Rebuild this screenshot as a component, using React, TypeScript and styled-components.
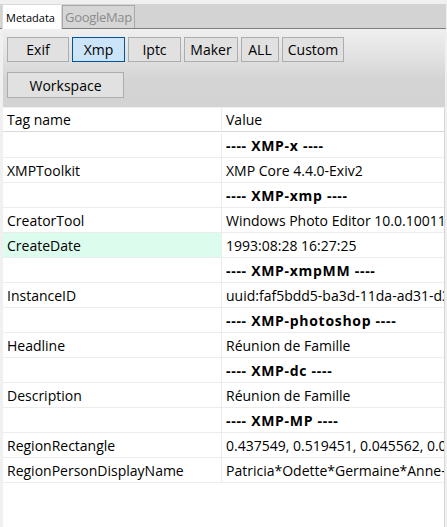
import React from 'react';
import styled, { createGlobalStyle } from 'styled-components';

const GlobalStyle = createGlobalStyle`
  html, body {
    margin: 0;
    padding: 0;
    background: #f0f0f0;
  }
  body {
    font-family: "Open Sans", "Noto Sans", "Liberation Sans", sans-serif;
    color: #000;
  }
`;

const Window = styled.div`
  width: 447px;
  height: 527px;
  background: #f0f0f0;
  display: flex;
  flex-direction: column;
  padding-top: 4px;
  box-sizing: border-box;
  overflow: hidden;
`;

const TabStrip = styled.div`
  height: 24px;
  margin-right: 1px;
  background: #d3d3d3;
  border-bottom: 1px solid #7f7f7f;
  display: flex;
  align-items: flex-end;
  padding-left: 2px;
  flex-shrink: 0;
`;

const Tab = styled.div<{ $active?: boolean }>`
  box-sizing: border-box;
  height: ${(p) => (p.$active ? '25px' : '23px')};
  margin-bottom: ${(p) => (p.$active ? '-1px' : '0')};
  padding: ${(p) => (p.$active ? '0 6px 0 3px' : '0 2px')};
  display: flex;
  align-items: center;
  background: ${(p) => (p.$active ? '#ffffff' : '#d6d6d6')};
  border: 1px solid ${(p) => (p.$active ? '#d9d9d9' : '#a9a9a9')};
  border-bottom: none;
  color: ${(p) => (p.$active ? '#000' : '#8c8c8c')};
  font-size: ${(p) => (p.$active ? '11px' : '13px')};
  letter-spacing: ${(p) => (p.$active ? '0' : '-0.3px')};
  white-space: nowrap;
`;

const Body = styled.div`
  flex: 1;
  display: flex;
  flex-direction: column;
  margin-left: 3px;
  margin-right: 2px;
  min-height: 0;
`;

const ButtonPanel = styled.div`
  height: 78px;
  box-sizing: border-box;
  padding: 8px 0 0 4px;
  background: linear-gradient(to bottom, #efefef 0%, #e4e4e4 30%, #d4d4d4 65%, #d3d3d3 100%);
  display: flex;
  flex-direction: column;
  gap: 10px;
  flex-shrink: 0;
`;

const ButtonRow = styled.div`
  display: flex;
  gap: 3px;
`;

const Button = styled.div<{ $w: number; $selected?: boolean; $h?: number }>`
  box-sizing: border-box;
  width: ${(p) => p.$w}px;
  height: ${(p) => p.$h ?? 25}px;
  display: flex;
  align-items: center;
  justify-content: center;
  background: ${(p) => (p.$selected ? '#cce4f7' : '#e1e1e1')};
  border: 1px solid ${(p) => (p.$selected ? '#005499' : '#adadad')};
  font-size: 14px;
  white-space: nowrap;
`;

const Grid = styled.div`
  flex: 1;
  background: #ffffff;
  border-right: 1px solid #d6d6d6;
  margin-top: 1px;
  display: grid;
  grid-template-columns: 219px 1fr;
  grid-auto-rows: 25px;
  align-content: start;
  overflow: hidden;
`;

const Cell = styled.div<{ $first?: boolean; $bold?: boolean; $hl?: boolean; $head?: boolean }>`
  box-sizing: border-box;
  height: ${(p) => (p.$head ? 24 : 25)}px;
  padding-left: 4px;
  display: flex;
  align-items: center;
  border-bottom: 1px solid ${(p) => (p.$head ? '#d9d9d9' : '#ececec')};
  border-right: ${(p) => (p.$first ? '1px solid #ececec' : 'none')};
  background: ${(p) => (p.$hl ? '#dcfcee' : 'transparent')};
  font-size: 14px;
  font-weight: ${(p) => (p.$bold ? 700 : 400)};
  letter-spacing: ${(p) => (p.$bold ? '0.7px' : '0')};
  white-space: nowrap;
  overflow: hidden;
`;

interface Row {
  tag: string;
  value: string;
  group?: boolean;
  hl?: boolean;
}

const rows: Row[] = [
  { tag: '', value: '---- XMP-x ----', group: true },
  { tag: 'XMPToolkit', value: 'XMP Core 4.4.0-Exiv2' },
  { tag: '', value: '---- XMP-xmp ----', group: true },
  { tag: 'CreatorTool', value: 'Windows Photo Editor 10.0.10011.16384' },
  { tag: 'CreateDate', value: '1993:08:28 16:27:25', hl: true },
  { tag: '', value: '---- XMP-xmpMM ----', group: true },
  { tag: 'InstanceID', value: 'uuid:faf5bdd5-ba3d-11da-ad31-d33d75182f1b' },
  { tag: '', value: '---- XMP-photoshop ----', group: true },
  { tag: 'Headline', value: 'Réunion de Famille' },
  { tag: '', value: '---- XMP-dc ----', group: true },
  { tag: 'Description', value: 'Réunion de Famille' },
  { tag: '', value: '---- XMP-MP ----', group: true },
  { tag: 'RegionRectangle', value: '0.437549, 0.519451, 0.045562, 0.060742' },
  { tag: 'RegionPersonDisplayName', value: 'Patricia*Odette*Germaine*Anne-Marie' },
];

export default function App() {
  return (
    <Window>
      <GlobalStyle />
      <TabStrip>
        <Tab $active>Metadata</Tab>
        <Tab>GoogleMap</Tab>
      </TabStrip>
      <Body>
        <ButtonPanel>
          <ButtonRow>
            <Button $w={62}>Exif</Button>
            <Button $w={53} $selected>Xmp</Button>
            <Button $w={53}>Iptc</Button>
            <Button $w={54}>Maker</Button>
            <Button $w={38}>ALL</Button>
            <Button $w={62}>Custom</Button>
          </ButtonRow>
          <ButtonRow>
            <Button $w={117} $h={26}>Workspace</Button>
          </ButtonRow>
        </ButtonPanel>
        <Grid>
          <Cell $first $head>Tag name</Cell>
          <Cell $head>Value</Cell>
          {rows.map((r, i) => (
            <React.Fragment key={i}>
              <Cell $first $hl={r.hl}>{r.tag}</Cell>
              <Cell $bold={r.group}>{r.value}</Cell>
            </React.Fragment>
          ))}
        </Grid>
      </Body>
    </Window>
  );
}
